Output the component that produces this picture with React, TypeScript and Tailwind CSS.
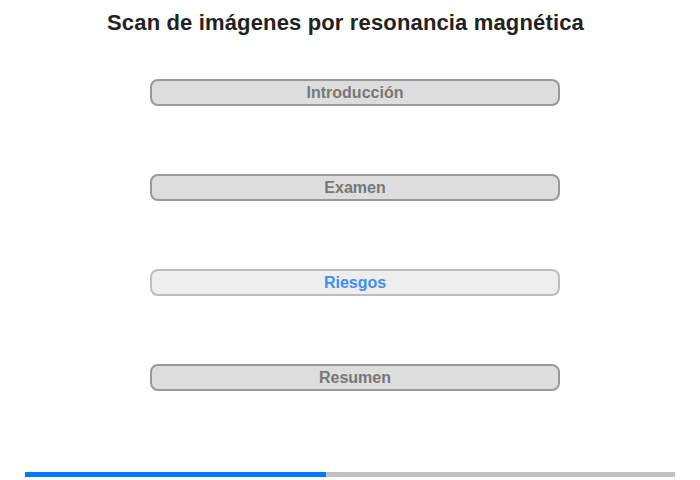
const sections = [
  { label: 'Introducción', active: false },
  { label: 'Examen', active: false },
  { label: 'Riesgos', active: true },
  { label: 'Resumen', active: false },
];

export default function App() {
  return (
    <div className="w-[700px] h-[480px] bg-white font-['Liberation_Sans',Arial,sans-serif] flex flex-col">
      <h1 className="pt-[10px] h-[79px] text-center text-[22px] leading-[26px] font-bold tracking-[0.15px] text-[#222] pr-[9px]">
        Scan de imágenes por resonancia magnética
      </h1>

      <div className="flex flex-col gap-[68px] pl-[150px]">
        {sections.map((s) => (
          <button
            key={s.label}
            className={
              s.active
                ? 'w-[410px] h-[27px] rounded-[8px] border-2 border-[#bdbdbd] bg-[#eeeeee] text-[#3d8ff5] text-[16px] font-bold leading-none'
                : 'w-[410px] h-[27px] rounded-[8px] border-2 border-[#999999] bg-[#dddddd] text-[#777777] text-[16px] font-bold leading-none'
            }
          >
            {s.label}
          </button>
        ))}
      </div>

      <div className="mt-auto mb-[3px] mx-[25px] h-[5px] flex bg-[#c2c2c2]">
        <div className="w-[301px] bg-[#007bff]" />
      </div>
    </div>
  );
}
